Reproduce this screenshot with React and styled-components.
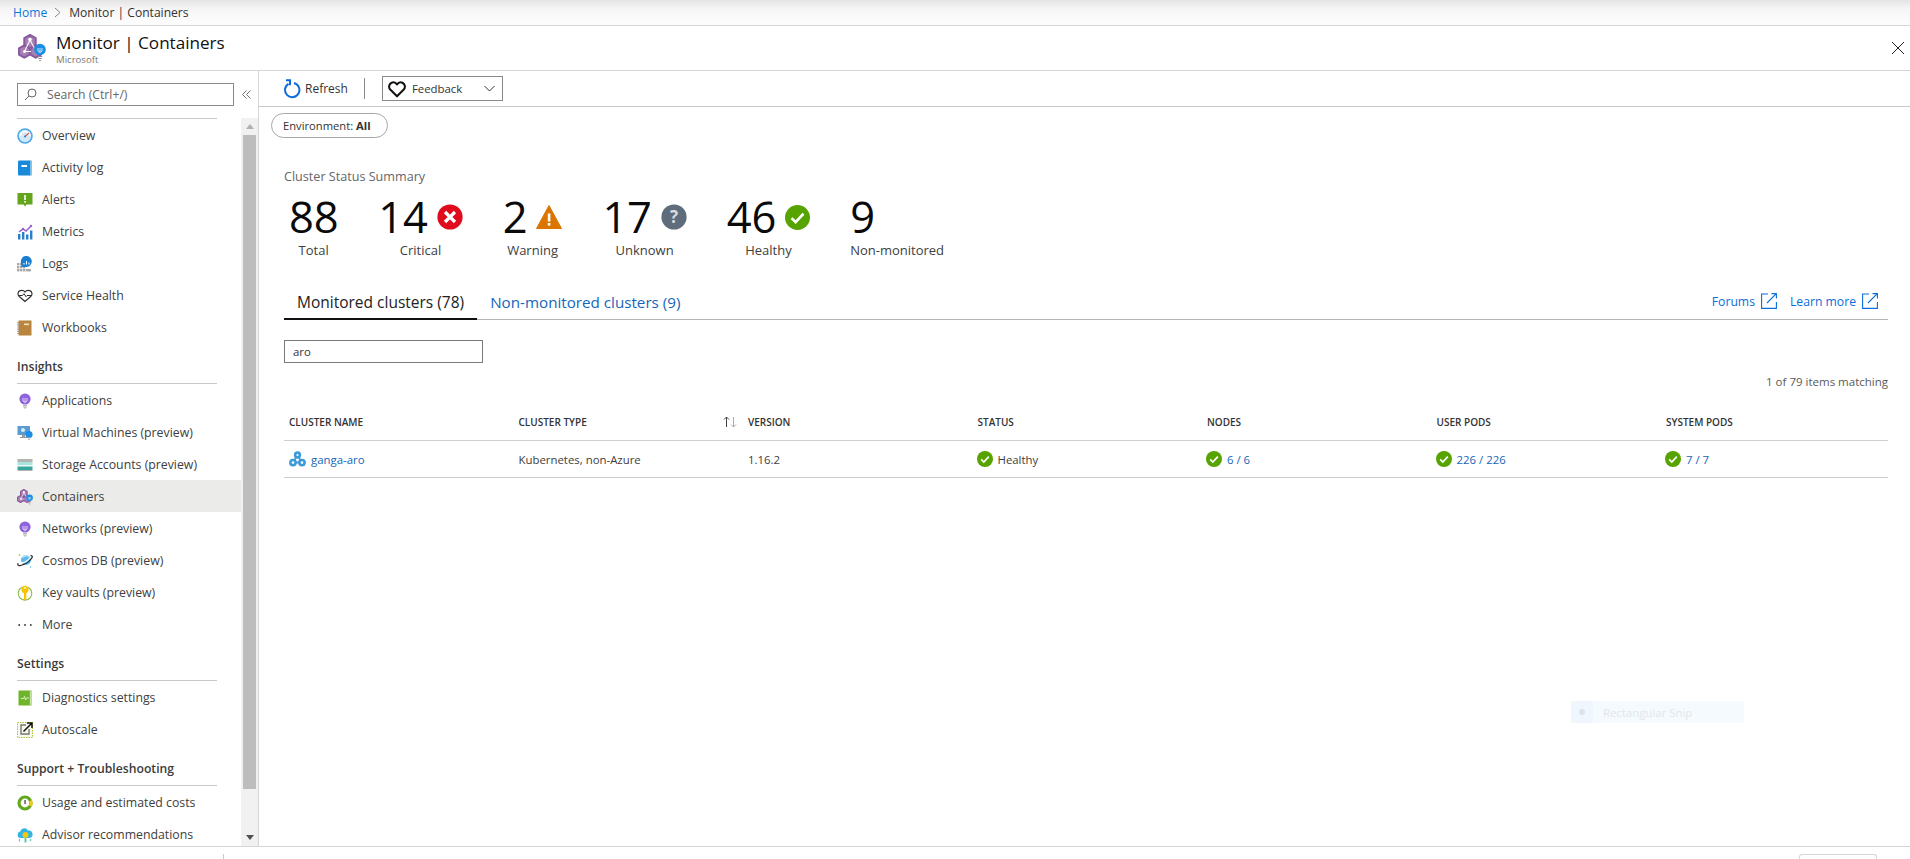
import React from "react";
import styled, { createGlobalStyle } from "styled-components";

const Global = createGlobalStyle`
	html, body {
		margin: 0;
		padding: 0;
		background: #fff;
		overflow: hidden;
	}
	body {
		font-family: "Open Sans", "Liberation Sans", sans-serif;
		font-size: 12px;
		color: #333;
	}
	* {
		box-sizing: border-box;
	}
`;

const Page = styled.div`
	position: relative;
	display: flex;
	flex-direction: column;
	width: 1910px;
	height: 859px;
	overflow: hidden;
`;

const Breadcrumb = styled.div`
	display: flex;
	align-items: center;
	height: 26px;
	padding: 0 0 1px 13px;
	border-bottom: 1px solid #d6d6d6;
	background: linear-gradient(#e4e4e4 0, #f6f6f6 9px, #fdfdfd 100%);
	font-size: 12.1px;
`;

const CrumbLink = styled.span`
	color: #0a78d7;
`;

const CrumbSep = styled.svg`
	margin: 0 8px 0 7px;
`;

const Header = styled.div`
	display: flex;
	align-items: center;
	height: 45px;
	padding: 0 6px 0 18px;
	border-bottom: 1px solid #d6d6d6;
`;

const TitleBlock = styled.div`
	display: flex;
	flex-direction: column;
	margin-left: 10px;
	flex: 1;
`;

const Title = styled.div`
	font-size: 17.1px;
	line-height: 23px;
	color: #111;
`;

const Subtitle = styled.div`
	font-size: 9.6px;
	line-height: 12px;
	color: #777;
`;

const Body = styled.div`
	display: flex;
	flex: 1;
	min-height: 0;
`;

const Sidebar = styled.aside`
	display: flex;
	flex-direction: column;
	width: 259px;
	border-right: 1px solid #d6d6d6;
	flex-shrink: 0;
`;

const SearchRow = styled.div`
	display: flex;
	height: 47px;
	padding: 12px 0 0 17px;
	flex-shrink: 0;
`;

const SearchBox = styled.div`
	display: flex;
	align-items: center;
	width: 217px;
	height: 23px;
	padding-left: 6px;
	border: 1px solid #8a8a8a;
	color: #666;
	font-size: 12.2px;
	gap: 10px;
`;

const Collapse = styled.svg`
	margin: 7px 0 0 8px;
`;

const SideBody = styled.div`
	display: flex;
	flex: 1;
	min-height: 0;
`;

const NavColumn = styled.nav`
	width: 241px;
	overflow: hidden;
`;

const Divider = styled.div`
	width: 200px;
	height: 1px;
	margin-left: 17px;
	background: #c8c8c8;
`;

const SectionTitle = styled.div`
	display: flex;
	align-items: center;
	height: 41px;
	margin-left: 17px;
	width: 200px;
	padding-top: 7px;
	border-bottom: 1px solid #c8c8c8;
	font-size: 12.2px;
	font-weight: 600;
	color: #3b3b3b;
`;

const NavRow = styled.div`
	display: flex;
	align-items: center;
	height: 32px;
	padding: 1px 0 0 17px;
	gap: 9px;
	font-size: 12.3px;
	color: #404040;
	white-space: nowrap;
	background: ${(p) => (p.$active ? "#ebebe9" : "transparent")};
`;

const Scrollbar = styled.div`
	display: flex;
	flex-direction: column;
	align-items: center;
	width: 17px;
	background: #f1f1f1;
`;

const ScrollArrow = styled.div`
	display: flex;
	align-items: center;
	justify-content: center;
	height: 17px;
	flex-shrink: 0;
`;

const ScrollThumb = styled.div`
	width: 13px;
	height: 654px;
	background: #bdbdbd;
`;

const ScrollGap = styled.div`
	flex: 1;
`;

const Main = styled.main`
	flex: 1;
	min-width: 0;
	display: flex;
	flex-direction: column;
`;

const Toolbar = styled.div`
	display: flex;
	align-items: center;
	height: 36px;
	padding-left: 24px;
	border-bottom: 1px solid #c8c8c8;
	flex-shrink: 0;
`;

const ToolButton = styled.div`
	display: flex;
	align-items: center;
	gap: 4px;
	font-size: 12px;
	color: #333;
`;

const ToolSep = styled.div`
	width: 1px;
	height: 21px;
	margin: 0 17px 0 16px;
	background: #8a8a8a;
`;

const Dropdown = styled.div`
	display: flex;
	align-items: center;
	width: 121px;
	height: 25px;
	padding: 0 7px 0 5px;
	border: 1px solid #8a8a8a;
	font-size: 11.4px;
	color: #333;
`;

const DropdownLabel = styled.span`
	flex: 1;
	margin-left: 6px;
`;

const Content = styled.div`
	padding: 6px 22px 0 25px;
`;

const Pill = styled.div`
	display: inline-flex;
	align-items: center;
	height: 25px;
	width: 117px;
	margin-left: -13px;
	padding-left: 11px;
	border: 1px solid #a8a8a8;
	border-radius: 13px;
	font-size: 11.2px;
	white-space: pre;
	color: #333;
`;

const PillValue = styled.b`
	font-weight: 700;
`;

const SummaryLabel = styled.div`
	margin-top: 30px;
	font-size: 12.6px;
	line-height: 18px;
	color: #666;
`;

const Stats = styled.div`
	display: flex;
	gap: 40px;
	margin-top: 8px;
	padding-left: 5px;
`;

const Stat = styled.div`
	display: flex;
	flex-direction: column;
	align-items: ${(p) => (p.$left ? "flex-start" : "center")};
`;

const StatTop = styled.div`
	display: flex;
	align-items: center;
	gap: 9px;
	height: 46px;
`;

const StatNumber = styled.span`
	font-size: 43.5px;
	line-height: 46px;
	color: #0a0a0a;
	letter-spacing: -0.2px;
`;

const StatLabel = styled.div`
	margin-top: 1px;
	font-size: 13px;
	line-height: 18px;
	color: #404040;
`;

const TabBar = styled.div`
	display: flex;
	align-items: stretch;
	height: 37px;
	margin-top: 24px;
	border-bottom: 1px solid #b4b4b4;
`;

const Tab = styled.div`
	display: flex;
	align-items: center;
	height: 37px;
	padding: 2px 13px 0;
	font-size: ${(p) => (p.$active ? "15.5px" : "15.2px")};
	white-space: nowrap;
	color: ${(p) => (p.$active ? "#222" : "#1566b9")};
	border-bottom: 2px solid ${(p) => (p.$active ? "#111" : "transparent")};
`;

const TabSpacer = styled.div`
	flex: 1;
`;

const ExtLink = styled.div`
	display: flex;
	align-items: center;
	gap: 6px;
	margin-left: 3px;
	margin-right: 10px;
	font-size: 12.2px;
	color: #0a6edb;
`;

const FilterInput = styled.div`
	display: flex;
	align-items: center;
	width: 199px;
	height: 23px;
	margin-top: 20px;
	padding-left: 8px;
	border: 1px solid #7a7a7a;
	font-size: 11.4px;
	color: #333;
`;

const MatchCount = styled.div`
	margin-top: 10px;
	line-height: 18px;
	font-size: 11.5px;
	text-align: right;
	color: #5a5a5a;
`;

const Grid = styled.div`
	display: grid;
	grid-template-columns: repeat(6, 229.5px) 1fr;
	align-items: center;
	padding: ${(p) => p.$top}px 0 0 5px;
	height: ${(p) => p.$height}px;
	border-bottom: 1px solid #cfcfcf;
`;

const HeadCell = styled.div`
	display: flex;
	justify-content: space-between;
	align-items: center;
	padding-right: ${(p) => (p.$sort ? "11px" : "0")};
	font-size: 10px;
	font-weight: 600;
	color: #333;
`;

const Cell = styled.div`
	display: flex;
	align-items: center;
	gap: 5px;
	margin-left: ${(p) => (p.$nudge ? "-1px" : "0")};
	font-size: 11.4px;
	color: ${(p) => (p.$link ? "#1566b9" : "#404040")};
`;

const Footer = styled.div`
	display: flex;
	height: 13px;
	border-top: 1px solid #d6d6d6;
	flex-shrink: 0;
	padding: 7px 33px 0 223px;
	justify-content: space-between;
`;

const FooterSep = styled.div`
	width: 1px;
	height: 6px;
	background: #c8c8c8;
`;

const FooterButton = styled.div`
	width: 78px;
	height: 8px;
	border: 1px solid #d6d6d6;
	border-bottom: 0;
	border-radius: 3px 3px 0 0;
`;

/* faded snipping tool tooltip caught in the screenshot */
const SnipGhost = styled.div`
	position: absolute;
	left: 1571px;
	top: 701px;
	display: flex;
	align-items: center;
	width: 173px;
	height: 22px;
	background: #f5faff;
	font-size: 11.4px;
	color: #e4e6e8;
`;

const SnipIcon = styled.div`
	display: flex;
	align-items: center;
	justify-content: center;
	width: 22px;
	height: 22px;
	margin-right: 10px;
	background: #eff6fe;
`;

const SnipDot = styled.div`
	width: 6px;
	height: 6px;
	border-radius: 50%;
	background: #dfe3e8;
`;

const hex = (cx, cy, r) =>
	[0, 60, 120, 180, 240, 300]
		.map((a) => {
			const t = (a * Math.PI) / 180;
			return `${(cx + r * Math.sin(t)).toFixed(2)},${(cy - r * Math.cos(t)).toFixed(2)}`;
		})
		.join(" ");

const ContainersLogo = ({ size = 28 }) => (
	<svg width={size} height={size} viewBox="0 0 28 28">
		<g fill="#a67fb4" stroke="#8a5a9e" strokeWidth="2" strokeLinejoin="round">
			<polygon points={hex(12, 7.5, 6.6)} />
			<polygon points={hex(6.3, 17.5, 6.2)} />
			<polygon points={hex(17.7, 17.5, 6.2)} />
		</g>
		<path d="M12 6L6.5 17.5M12 6l4 7.5M6.5 17.5H13" fill="none" stroke="#fff" strokeWidth="1.1" />
		<circle cx="12" cy="5.5" r="1.8" fill="#fff" />
		<circle cx="6.5" cy="17.5" r="1.5" fill="#fff" />
		<circle cx="22" cy="15.5" r="5.8" fill="#1a8fe3" />
		<path d="M20 14v3l2 1.5 2-1.5v-3M22 18.5v-4.5" fill="none" stroke="#d7eefc" strokeWidth="0.9" />
		<path d="M19.8 22.5h4.4M20.3 24.5h3.4M21.2 26.5h1.6" stroke="#8a8a8a" strokeWidth="1.1" />
	</svg>
);

const OverviewIcon = () => (
	<svg width="16" height="16" viewBox="0 0 16 16">
		<circle cx="8" cy="8" r="7" fill="#cfe9fa" stroke="#4aa8e4" strokeWidth="1.6" />
		<path d="M3.5 8a4.5 4.5 0 0 1 9 0" fill="none" stroke="#fff" strokeWidth="1.6" />
		<path d="M8 8.5L12 5" stroke="#d8584c" strokeWidth="1.1" />
		<circle cx="8" cy="8.5" r="1" fill="#3c7fb5" />
	</svg>
);

const ActivityIcon = () => (
	<svg width="16" height="16" viewBox="0 0 16 16">
		<rect x="1" y="0.5" width="13.5" height="15" rx="1" fill="#1a8ad8" />
		<rect x="13" y="0.5" width="1.5" height="15" fill="#7cc0ec" />
		<rect x="4.5" y="5" width="5.5" height="2" fill="#fff" />
	</svg>
);

const AlertsIcon = () => (
	<svg width="16" height="16" viewBox="0 0 16 16">
		<path d="M0.5 1h15v11.5h-6l-1.5 2-1.5-2h-6z" fill="#64a51e" />
		<rect x="7.2" y="3" width="1.6" height="5" fill="#fff" />
		<rect x="7.2" y="9" width="1.6" height="1.6" fill="#fff" />
	</svg>
);

const MetricsIcon = () => (
	<svg width="16" height="16" viewBox="0 0 16 16">
		<path d="M2 8l4-3 3 2 5-5" fill="none" stroke="#9a5fd0" strokeWidth="1.5" />
		<circle cx="14" cy="2" r="1.2" fill="#9a5fd0" />
		<circle cx="6" cy="5" r="1.2" fill="#9a5fd0" />
		<rect x="1" y="10" width="2.4" height="5.5" fill="#2a7fc9" />
		<rect x="5" y="8" width="2.4" height="7.5" fill="#2a7fc9" />
		<rect x="9" y="10.5" width="2.4" height="5" fill="#2a7fc9" />
		<rect x="13" y="6.5" width="2.4" height="9" fill="#2a7fc9" />
	</svg>
);

const LogsIcon = () => (
	<svg width="16" height="16" viewBox="0 0 16 16">
		<g fill="#a8a8a8">
			{[1, 4, 7].map((x) => [6, 9, 12].map((y) => <rect key={`${x}-${y}`} x={x - 1} y={y + 1} width="2.4" height="2.4" />))}
			<rect x="9" y="13" width="5" height="2.4" />
		</g>
		<path d="M4 7a5.5 5.5 0 1 1 5.5 4H4.5z" fill="#1a7fd0" />
		<path d="M7 7v1.5M9.5 5v3.5M12 6.5v2" stroke="#fff" strokeWidth="1.1" />
	</svg>
);

const HeartIcon = ({ size = 16 }) => (
	<svg width={size} height={size} viewBox="0 0 16 16">
		<path
			d="M8 14.5L2 8.5C.3 6.6.8 3.4 3.2 2.4 5 1.7 7 2.4 8 4c1-1.6 3-2.3 4.8-1.6 2.4 1 2.9 4.2 1.2 6.1z"
			fill="none"
			stroke="#111"
			strokeWidth="1.8"
			strokeLinejoin="round"
		/>
	</svg>
);

const HealthIcon = () => (
	<svg width="16" height="16" viewBox="0 0 16 16">
		<path
			d="M8 13.5L2 8.2C.3 6.4.8 3.4 3.2 2.6 5 2 7 2.6 8 4c1-1.4 3-2 4.8-1.4 2.4.8 2.9 3.8 1.2 5.6z"
			fill="none"
			stroke="#333"
			strokeWidth="1.2"
		/>
		<path d="M1.5 7.5h4l1.5-1.8 2 3 1-1.2h4.5" fill="none" stroke="#333" strokeWidth="1" />
	</svg>
);

const WorkbookIcon = () => (
	<svg width="16" height="16" viewBox="0 0 16 16">
		<rect x="1.5" y="0.5" width="13" height="15" fill="#b9843c" />
		<path d="M1 2v12" stroke="#8a8a8a" strokeWidth="1.4" strokeDasharray="1.2 1" />
		<rect x="7" y="3.5" width="5" height="1.6" fill="#f2e2c6" />
	</svg>
);

const BulbIcon = () => (
	<svg width="16" height="16" viewBox="0 0 16 16">
		<circle cx="8" cy="6" r="5.6" fill="#8e63dc" />
		<path d="M6 5v3l2 1.5 2-1.5V5M8 9.5V5" fill="none" stroke="#e6dcfa" strokeWidth="0.9" />
		<path d="M6 12.6h4M6.5 14.2h3" stroke="#b0b0b0" strokeWidth="1.1" />
		<path d="M7.4 15.6h1.2" stroke="#b0b0b0" strokeWidth="0.8" />
	</svg>
);

const VmIcon = () => (
	<svg width="16" height="16" viewBox="0 0 16 16">
		<rect x="0.5" y="1" width="12.5" height="9" fill="#5a9bd0" />
		<rect x="5" y="10" width="3" height="2.5" fill="#9a9a9a" />
		<rect x="3" y="12" width="7" height="1" fill="#9a9a9a" />
		<circle cx="6" cy="5" r="2" fill="#d5ecfa" />
		<circle cx="12" cy="9.5" r="3.6" fill="#1a8fe3" />
		<path d="M11 12.8h2M11.3 14.4h1.4" stroke="#9a9a9a" strokeWidth="1" />
	</svg>
);

const StorageIcon = () => (
	<svg width="16" height="16" viewBox="0 0 16 16">
		<rect x="0.5" y="2" width="15" height="3" fill="#b4b4b4" />
		<rect x="0.5" y="5" width="15" height="3.5" fill="#a6e4dc" />
		<rect x="0.5" y="8.5" width="15" height="1" fill="#fff" />
		<rect x="0.5" y="9.5" width="15" height="3.5" fill="#36a79a" />
		<rect x="0.5" y="13" width="15" height="1" fill="#b4b4b4" />
	</svg>
);

const CosmosIcon = () => (
	<svg width="16" height="16" viewBox="0 0 16 16">
		<circle cx="9" cy="7" r="5" fill="#5cb8e8" />
		<path d="M5.5 4.5a4.6 4.6 0 0 1 7-.4" fill="none" stroke="#c4e7f8" strokeWidth="1.4" />
		<path d="M4 9.5c3 .5 7-2 9.5-5.5" fill="none" stroke="#fff" strokeWidth="1.2" />
		<path d="M13.5 2.5c2 0 2.3 1.3 1 3-2.2 3-7 6.2-11 7-2.2.4-3.2-.6-2.4-2.2" fill="none" stroke="#222" strokeWidth="1.2" />
		<circle cx="2.5" cy="2" r="1" fill="#b6d94c" />
		<circle cx="13.5" cy="14" r="0.8" fill="#5ec8e8" />
	</svg>
);

const KeyIcon = () => (
	<svg width="16" height="16" viewBox="0 0 16 16">
		<path d="M5 2.2A6.8 6.8 0 1 0 11 2.2" fill="none" stroke="#86bd4c" strokeWidth="1.1" />
		<circle cx="8" cy="4.4" r="3.6" fill="#f7c400" />
		<path d="M7 7h2.3v7.5L8 15.5 7 14.5z" fill="#f7c400" />
		<rect x="6.8" y="2.3" width="2.4" height="1.2" fill="#fff" />
	</svg>
);

const MoreIcon = () => (
	<svg width="16" height="16" viewBox="0 0 16 16" fill="#333">
		<circle cx="2.2" cy="8" r="0.9" />
		<circle cx="8" cy="8" r="0.9" />
		<circle cx="13.8" cy="8" r="0.9" />
	</svg>
);

const DiagnosticsIcon = () => (
	<svg width="16" height="16" viewBox="0 0 16 16">
		<rect x="1.5" y="0.5" width="13" height="15" fill="#6fb52c" />
		<rect x="12.8" y="0.5" width="1.7" height="15" fill="#c3dfa2" />
		<path d="M4 8.5h2.5l1-2 1 3.5 1-2H12" fill="none" stroke="#e5f3d5" strokeWidth="0.9" />
	</svg>
);

const AutoscaleIcon = () => (
	<svg width="16" height="16" viewBox="0 0 16 16">
		<rect x="0.5" y="0.5" width="15" height="15" fill="#f6f9ea" stroke="#a8c83c" strokeDasharray="1.5 1" />
		<path d="M9 3H4v9h8V7" fill="none" stroke="#777" strokeWidth="1.4" />
		<path d="M6.5 9.5L14.5 1.5M10 1h5v5" fill="none" stroke="#111" strokeWidth="1.5" />
	</svg>
);

const UsageIcon = () => (
	<svg width="16" height="16" viewBox="0 0 16 16">
		<circle cx="8" cy="8" r="6" fill="#fff" stroke="#62a81e" strokeWidth="3.2" />
		<path d="M8 2a6 6 0 0 1 5.2 9" fill="none" stroke="#f2c811" strokeWidth="3.2" strokeDasharray="0 7 20" />
		<rect x="7.4" y="5" width="1.3" height="4" fill="#444" />
	</svg>
);

const AdvisorIcon = () => (
	<svg width="16" height="16" viewBox="0 0 16 16">
		<path d="M3.5 11A3.3 3.3 0 0 1 3.2 4.5 4.2 4.2 0 0 1 11 3.6 3.7 3.7 0 0 1 12.5 11z" fill="#32b4e6" />
		<circle cx="8.5" cy="8" r="3" fill="#f2c811" />
		<path d="M7.5 11v4.5h2V11" fill="#5ec8b4" />
		<path d="M2.5 12v2.5M13.5 12v2" stroke="#5ec8b4" strokeWidth="1.2" />
	</svg>
);

const ClusterIcon = () => (
	<svg width="17" height="16" viewBox="0 0 17 16">
		<path d="M8.5 4L4 11.5H13z" fill="none" stroke="#3b9bd8" strokeWidth="1.8" />
		<circle cx="8.5" cy="4" r="3.7" fill="#3b9bd8" />
		<circle cx="4" cy="11.6" r="3.9" fill="#3b9bd8" />
		<circle cx="13" cy="11.6" r="3.9" fill="#3b9bd8" />
		<circle cx="8.5" cy="4" r="1.1" fill="#fff" />
		<circle cx="4" cy="11.6" r="1.3" fill="#fff" />
		<circle cx="13" cy="11.6" r="1.3" fill="#fff" />
	</svg>
);

const CheckIcon = ({ size = 16 }) => (
	<svg width={size} height={size} viewBox="0 0 16 16">
		<circle cx="8" cy="8" r="8" fill="#57a300" />
		<path d="M4.2 8.4l2.6 2.6 5-5.4" fill="none" stroke="#fff" strokeWidth="1.7" />
	</svg>
);

const CriticalIcon = () => (
	<svg width="26" height="26" viewBox="0 0 26 26">
		<circle cx="13" cy="13" r="12.6" fill="#e00b1c" />
		<path d="M8 8l10 10M18 8L8 18" stroke="#fff" strokeWidth="3.2" />
	</svg>
);

const WarningIcon = () => (
	<svg width="26" height="26" viewBox="0 0 26 26">
		<path d="M13 1.5L25.5 24.5H.5z" fill="#db7500" stroke="#db7500" strokeLinejoin="round" />
		<rect x="11.8" y="9.5" width="2.6" height="8" fill="#fff" />
		<rect x="11.8" y="19" width="2.6" height="2.6" fill="#fff" />
	</svg>
);

const UnknownIcon = () => (
	<svg width="26" height="26" viewBox="0 0 26 26">
		<circle cx="13" cy="13" r="12.6" fill="#5f6c7b" />
		<text x="13" y="19" textAnchor="middle" fontFamily="Open Sans" fontSize="17" fontWeight="700" fill="#d8dce0">
			?
		</text>
	</svg>
);

const RefreshIcon = () => (
	<svg width="18" height="20" viewBox="0 0 18 20">
		<path d="M5.5 4.8A7.2 7.2 0 1 0 11 4" fill="none" stroke="#0f6cd8" strokeWidth="2" />
		<path d="M3 1.2h4v5" fill="none" stroke="#0f6cd8" strokeWidth="2" />
	</svg>
);

const SearchGlyph = () => (
	<svg width="13" height="13" viewBox="0 0 13 13">
		<circle cx="8" cy="5" r="4" fill="none" stroke="#666" />
		<path d="M5 8l-4 4" stroke="#666" />
	</svg>
);

const ExternalIcon = () => (
	<svg width="16" height="16" viewBox="0 0 16 16" fill="none" stroke="#0a6edb" strokeWidth="1.1">
		<path d="M7 1H.6v14.4h14.8V9" />
		<path d="M6 10l9.3-9.4M10.5.6h4.9v4.9" />
	</svg>
);

const SortArrows = () => (
	<svg width="14" height="12" viewBox="0 0 14 12" fill="none" strokeWidth="1">
		<path d="M3.5 11V1M1 3.5L3.5 1 6 3.5" stroke="#444" />
		<path d="M10.5 1v10M8 8.5L10.5 11 13 8.5" stroke="#aaa" />
	</svg>
);

const navSections = [
	{
		items: [
			["Overview", OverviewIcon],
			["Activity log", ActivityIcon],
			["Alerts", AlertsIcon],
			["Metrics", MetricsIcon],
			["Logs", LogsIcon],
			["Service Health", HealthIcon],
			["Workbooks", WorkbookIcon],
		],
	},
	{
		title: "Insights",
		items: [
			["Applications", BulbIcon],
			["Virtual Machines (preview)", VmIcon],
			["Storage Accounts (preview)", StorageIcon],
			["Containers", () => <ContainersLogo size={16} />, true],
			["Networks (preview)", BulbIcon],
			["Cosmos DB (preview)", CosmosIcon],
			["Key vaults (preview)", KeyIcon],
			["More", MoreIcon],
		],
	},
	{
		title: "Settings",
		items: [
			["Diagnostics settings", DiagnosticsIcon],
			["Autoscale", AutoscaleIcon],
		],
	},
	{
		title: "Support + Troubleshooting",
		items: [
			["Usage and estimated costs", UsageIcon],
			["Advisor recommendations", AdvisorIcon],
		],
	},
];

const stats = [
	{ value: "88", label: "Total" },
	{ value: "14", label: "Critical", Icon: CriticalIcon },
	{ value: "2", label: "Warning", Icon: WarningIcon },
	{ value: "17", label: "Unknown", Icon: UnknownIcon },
	{ value: "46", label: "Healthy", Icon: () => <CheckIcon size={25} /> },
	{ value: "9", label: "Non-monitored", left: true },
];

export default function App() {
	return (
		<Page>
			<Global />
			<Breadcrumb>
				<CrumbLink>Home</CrumbLink>
				<CrumbSep width="7" height="11" viewBox="0 0 7 11">
					<path d="M1 1l5 4.5L1 10" fill="none" stroke="#888" />
				</CrumbSep>
				<span>Monitor | Containers</span>
			</Breadcrumb>
			<Header>
				<ContainersLogo />
				<TitleBlock>
					<Title>Monitor | Containers</Title>
					<Subtitle>Microsoft</Subtitle>
				</TitleBlock>
				<svg width="12" height="12" viewBox="0 0 12 12">
					<path d="M0 0l12 12M12 0L0 12" stroke="#222" />
				</svg>
			</Header>
			<Body>
				<Sidebar>
					<SearchRow>
						<SearchBox>
							<SearchGlyph />
							Search (Ctrl+/)
						</SearchBox>
						<Collapse width="9" height="9" viewBox="0 0 9 9" fill="none" stroke="#777">
							<path d="M4.5 .5l-4 4 4 4M8.5 .5l-4 4 4 4" />
						</Collapse>
					</SearchRow>
					<SideBody>
						<NavColumn>
							<Divider />
							{navSections.map((section, i) => (
								<div key={i}>
									{section.title && <SectionTitle>{section.title}</SectionTitle>}
									{section.items.map(([label, Icon, active]) => (
										<NavRow key={label} $active={active}>
											<Icon />
											{label}
										</NavRow>
									))}
								</div>
							))}
						</NavColumn>
						<Scrollbar>
							<ScrollArrow>
								<svg width="8" height="5" viewBox="0 0 8 5">
									<path d="M4 0l4 5H0z" fill="#b0b0b0" />
								</svg>
							</ScrollArrow>
							<ScrollThumb />
							<ScrollGap />
							<ScrollArrow>
								<svg width="8" height="5" viewBox="0 0 8 5">
									<path d="M0 0h8L4 5z" fill="#505050" />
								</svg>
							</ScrollArrow>
						</Scrollbar>
					</SideBody>
				</Sidebar>
				<Main>
					<Toolbar>
						<ToolButton>
							<RefreshIcon />
							Refresh
						</ToolButton>
						<ToolSep />
						<Dropdown>
							<HeartIcon size={18} />
							<DropdownLabel>Feedback</DropdownLabel>
							<svg width="11" height="7" viewBox="0 0 11 7">
								<path d="M.5 1l5 5 5-5" fill="none" stroke="#333" />
							</svg>
						</Dropdown>
					</Toolbar>
					<Content>
						<Pill>
							Environment: <PillValue>All</PillValue>
						</Pill>
						<SummaryLabel>Cluster Status Summary</SummaryLabel>
						<Stats>
							{stats.map(({ value, label, Icon, left }) => (
								<Stat key={label} $left={left}>
									<StatTop>
										<StatNumber>{value}</StatNumber>
										{Icon && <Icon />}
									</StatTop>
									<StatLabel>{label}</StatLabel>
								</Stat>
							))}
						</Stats>
						<TabBar>
							<Tab $active>Monitored clusters (78)</Tab>
							<Tab>Non-monitored clusters (9)</Tab>
							<TabSpacer />
							<ExtLink>
								Forums <ExternalIcon />
							</ExtLink>
							<ExtLink>
								Learn more <ExternalIcon />
							</ExtLink>
						</TabBar>
						<FilterInput>aro</FilterInput>
						<MatchCount>1 of 79 items matching</MatchCount>
						<Grid $height={50} $top={12}>
							<HeadCell>CLUSTER NAME</HeadCell>
							<HeadCell $sort>
								CLUSTER TYPE <SortArrows />
							</HeadCell>
							<HeadCell>VERSION</HeadCell>
							<HeadCell>STATUS</HeadCell>
							<HeadCell>NODES</HeadCell>
							<HeadCell>USER PODS</HeadCell>
							<HeadCell>SYSTEM PODS</HeadCell>
						</Grid>
						<Grid $height={37} $top={0}>
							<Cell $link>
								<ClusterIcon />
								ganga-aro
							</Cell>
							<Cell>Kubernetes, non-Azure</Cell>
							<Cell>1.16.2</Cell>
							<Cell $nudge>
								<CheckIcon />
								Healthy
							</Cell>
							<Cell $link $nudge>
								<CheckIcon />6 / 6
							</Cell>
							<Cell $link $nudge>
								<CheckIcon />
								226 / 226
							</Cell>
							<Cell $link $nudge>
								<CheckIcon />7 / 7
							</Cell>
						</Grid>
					</Content>
				</Main>
			</Body>
			<Footer>
				<FooterSep />
				<FooterButton />
			</Footer>
			<SnipGhost>
				<SnipIcon>
					<SnipDot />
				</SnipIcon>
				Rectangular Snip
			</SnipGhost>
		</Page>
	);
}
